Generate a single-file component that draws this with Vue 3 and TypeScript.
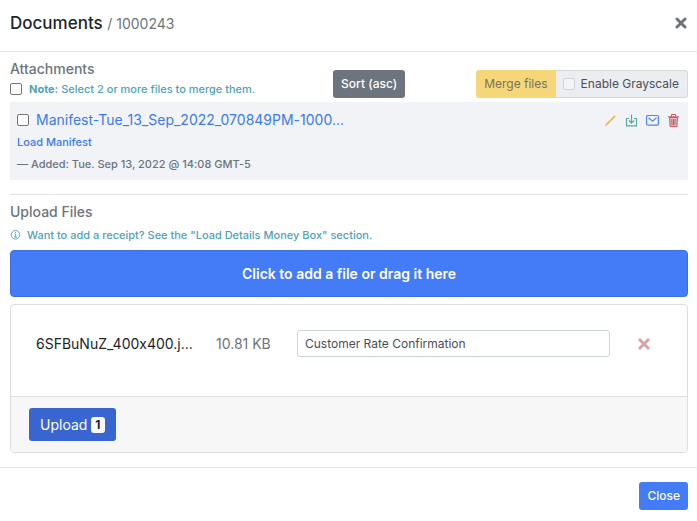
<script setup lang="ts">
import { ref } from 'vue'

const loadNumber = '1000243'
const selectAll = ref(false)
const manifestSelected = ref(false)
const grayscale = ref(false)
const documentType = ref('Customer Rate Confirmation')
const queued = ref([{ name: '6SFBuNuZ_400x400.j...', size: '10.81 KB' }])
</script>

<template>
  <div class="modal">
    <header class="modal-header">
      <h1>Documents <small>/ {{ loadNumber }}</small></h1>
      <button class="icon-button dismiss" type="button" aria-label="Dismiss">
        <svg width="12" height="12" viewBox="0 0 12 12">
          <path d="M2 2 10 10M10 2 2 10" stroke="currentColor" stroke-width="3" stroke-linecap="round" />
        </svg>
      </button>
    </header>

    <main class="modal-body">
      <section>
        <div class="toolbar">
          <div class="intro">
            <h2>Attachments</h2>
            <label class="note">
              <input v-model="selectAll" class="check" type="checkbox" />
              <span><strong>Note:</strong> Select 2 or more files to merge them.</span>
            </label>
          </div>
          <button class="btn sort" type="button">Sort (asc)</button>
          <div class="merge-group">
            <button class="merge" type="button" disabled>Merge files</button>
            <label class="grayscale">
              <input v-model="grayscale" class="check faint" type="checkbox" />
              <span>Enable Grayscale</span>
            </label>
          </div>
        </div>

        <article class="attachment">
          <div class="attachment-row">
            <input v-model="manifestSelected" class="check" type="checkbox" aria-label="Select manifest" />
            <a class="file-link" href="#">Manifest-Tue_13_Sep_2022_070849PM-1000...</a>
            <div class="actions">
              <button class="icon-button edit" type="button" aria-label="Edit">
                <svg width="13" height="13" viewBox="0 0 13 13" fill="none" stroke="currentColor">
                  <path d="M2 11 11.2 1.8" stroke-width="1.9" />
                  <path d="M.9 12.1 2.4 11" stroke-width="1" />
                </svg>
              </button>
              <button class="icon-button download" type="button" aria-label="Download">
                <svg width="13" height="13" viewBox="0 0 13 13" fill="none" stroke="currentColor" stroke-width="1.2">
                  <path d="M4 4.5H1.5v7.4h10V4.5H9M6.5.5V9M3.9 6.5 6.5 9.1l2.6-2.6" />
                </svg>
              </button>
              <button class="icon-button mail" type="button" aria-label="Email">
                <svg width="13" height="13" viewBox="0 0 13 13" fill="none" stroke="currentColor" stroke-width="1.2">
                  <rect x=".6" y="1.5" width="11.8" height="9.6" rx="1" />
                  <path d="m2.5 3.8 4 3.4 4-3.4" />
                </svg>
              </button>
              <button class="icon-button trash" type="button" aria-label="Delete">
                <svg width="13" height="13" viewBox="0 0 13 13" fill="none" stroke="currentColor" stroke-width="1">
                  <path d="M2.5 3.5h8l-.6 8.9H3.1z" fill="currentColor" fill-opacity=".3" />
                  <path d="M1 2.8h11M4.5 2.5v-2h4v2M4.8 5l.2 6M6.5 5v6M8.2 5 8 11" />
                </svg>
              </button>
            </div>
          </div>
          <a class="type-link" href="#">Load Manifest</a>
          <p class="added">— Added: Tue. Sep 13, 2022 @ 14:08 GMT-5</p>
        </article>
      </section>

      <hr />

      <section>
        <h2>Upload Files</h2>
        <p class="hint">
          <svg width="11" height="11" viewBox="0 0 11 11" fill="none" stroke="currentColor" stroke-width=".9">
            <circle cx="5.5" cy="4.8" r="4.3" />
            <path d="M4.4 4h1.2v3M4.1 7h2.9M5 2.4h1" />
          </svg>
          <span>Want to add a receipt? See the "Load Details Money Box" section.</span>
        </p>
        <button class="dropzone" type="button">Click to add a file or drag it here</button>

        <div class="card">
          <div v-for="file in queued" :key="file.name" class="queued-file">
            <span class="file-name">{{ file.name }}</span>
            <span class="file-size">{{ file.size }}</span>
            <input v-model="documentType" class="type-input" type="text" aria-label="Document type" />
            <button class="icon-button remove" type="button" aria-label="Remove file">
              <svg width="12" height="12" viewBox="0 0 12 12">
                <path d="M2 2 10 10M10 2 2 10" stroke="currentColor" stroke-width="2.8" stroke-linecap="square" />
              </svg>
            </button>
          </div>
          <div class="card-footer">
            <button class="upload" type="button">Upload <span class="badge">{{ queued.length }}</span></button>
          </div>
        </div>
      </section>
    </main>

    <footer class="modal-footer">
      <button class="btn close" type="button">Close</button>
    </footer>
  </div>
</template>

<style>
body {
  margin: 0;
  background: #fff;
}
</style>

<style scoped>
.modal {
  font-family: Inter, "Liberation Sans", sans-serif;
  font-size: 12px;
  line-height: 20px;
  font-variant-ligatures: no-contextual;
  color: #212529;
}

.modal *,
.modal *::before {
  box-sizing: border-box;
}

h1,
h2,
p {
  margin: 0;
}

button,
input {
  font: inherit;
  font-variant-ligatures: inherit;
}

button {
  border: 0;
  border-radius: 3px;
  cursor: pointer;
}

a {
  color: #3c7be8;
  text-decoration: none;
}

.modal-header {
  display: flex;
  align-items: center;
  justify-content: space-between;
  padding: 11px 10px 16px;
  border-bottom: 1px solid #dee2e6;
}

h1 {
  font-size: 17px;
  line-height: 24px;
  font-weight: 500;
}

h1 small {
  font-size: 14px;
  line-height: 20px;
  font-weight: 400;
  color: #6c757d;
}

h2 {
  font-size: 14px;
  line-height: 20px;
  font-weight: 500;
  color: #6c757d;
}

.icon-button {
  display: flex;
  padding: 0;
  background: none;
}

.dismiss {
  color: #6f7478;
}

.modal-body {
  padding: 7px 9px 14px 10px;
}

.toolbar {
  display: flex;
  align-items: end;
  justify-content: space-between;
  padding-bottom: 3px;
}

.intro {
  padding-right: 7px;
  white-space: nowrap;
}

.note {
  display: flex;
  align-items: center;
  gap: 7px;
  font-size: 11px;
  font-weight: 500;
  color: #4fa3b5;
}

.note strong {
  font-weight: 700;
}

.check {
  appearance: none;
  flex: none;
  width: 12px;
  height: 12px;
  margin: 0;
  border: 1px solid #767676;
  border-radius: 2px;
  background: #fff;
}

.check:checked {
  background: #447bf6;
}

.check.faint {
  border-color: #cfd2d6;
  background: #f3f4f6;
}

.btn {
  height: 28px;
  padding: 0 8px;
  font-weight: 500;
  color: #fff;
}

.sort,
.merge-group {
  margin-bottom: 1px;
}

.sort {
  background: #6c757d;
}

.merge-group {
  display: flex;
  height: 28px;
  white-space: nowrap;
}

.merge {
  padding: 0 8px;
  border-radius: 3px 0 0 3px;
  background: #f5d779;
  color: #7c7352;
}

.grayscale {
  display: flex;
  align-items: center;
  gap: 6px;
  padding: 0 8px 0 7px;
  border: 1px solid #d5d9dd;
  border-left: 0;
  border-radius: 0 3px 3px 0;
  background: #ebedf0;
  color: #495057;
}

.attachment {
  padding: 8px 7px 6px;
  background: #f1f3f7;
  font-size: 11px;
}

.attachment-row {
  display: flex;
  align-items: center;
  gap: 7px;
}

.file-link {
  font-size: 14px;
}

.actions {
  display: flex;
  gap: 8px;
  margin-left: auto;
  padding-right: 1px;
}

.edit {
  color: #eebd59;
}

.download {
  color: #5eaa9a;
}

.mail {
  color: #5487ec;
}

.trash {
  color: #c65661;
}

.type-link {
  display: block;
  line-height: 24px;
  font-weight: 500;
}

.added {
  font-weight: 500;
  color: #6c757d;
}

hr {
  margin: 14px 0 7px;
  border: 0;
  border-top: 1px solid #e2e4e6;
}

.hint {
  display: flex;
  align-items: center;
  gap: 6px;
  padding: 3px 0 5px;
  font-size: 11px;
  font-weight: 500;
  color: #4fa3b5;
}

.dropzone {
  width: 100%;
  height: 47px;
  border: 1px solid #3b6fdf;
  border-radius: 4px;
  background: #447bf6;
  color: #fff;
  font-size: 14px;
  font-weight: 600;
}

.card {
  margin-top: 7px;
  overflow: hidden;
  border: 1px solid #dcdee0;
  border-radius: 4px;
}

.queued-file {
  display: grid;
  grid-template-columns: 155px 56px 1fr 40px;
  align-items: center;
  column-gap: 25px;
  padding: 25px 12px 39px 25px;
  white-space: nowrap;
}

.file-name,
.file-size {
  font-size: 14px;
}

.file-size {
  color: #6c757d;
}

.type-input {
  width: 100%;
  min-width: 0;
  height: 27px;
  padding: 0 7px;
  border: 1px solid #ced4da;
  border-radius: 3px;
  background: #fff;
  color: #495057;
}

.remove {
  padding-left: 3px;
  color: #dc9ea5;
}

.card-footer {
  padding: 11px 18px;
  border-top: 1px solid #dcdee0;
  background: #f7f7f7;
}

.upload {
  display: flex;
  align-items: center;
  gap: 4px;
  height: 33px;
  padding: 0 11px;
  background: #3965d0;
  color: #fff;
  font-size: 14px;
}

.badge {
  padding: 0 4px;
  border-radius: 3px;
  background: #f8f9fa;
  color: #212529;
  font-size: 12px;
  line-height: 16px;
  font-weight: 700;
}

.modal-footer {
  display: flex;
  justify-content: flex-end;
  padding: 14px 9px 11px;
  border-top: 1px solid #dee2e6;
}

.close {
  background: #447bf6;
}
</style>
